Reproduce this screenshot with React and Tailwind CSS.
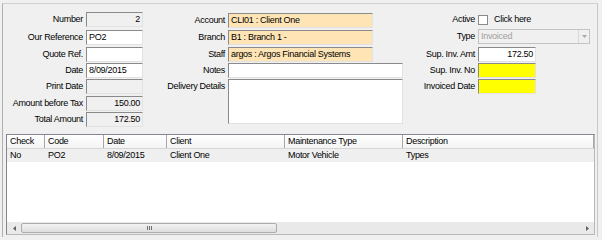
import React from 'react';

const sunken = 'border border-t-[#8a8a8a] border-l-[#8a8a8a] border-r-[#e2e2e2] border-b-[#e2e2e2]';

const Field = ({ label, labelW, mt, children }) => (
  <div className={`flex items-center h-[15px] ${mt}`}>
    <div className={`${labelW} text-right pr-[3px] text-[#000] whitespace-nowrap`}>{label}</div>
    {children}
  </div>
);

const Box = ({ w, bg, right, children }) => (
  <div className={`${w} h-[15px] ${bg} ${sunken} flex items-center px-[2px] ${right ? 'justify-end' : ''} whitespace-nowrap overflow-hidden`}>
    {children}
  </div>
);

const columns = [
  { name: 'Check', w: 'w-[38px]' },
  { name: 'Code', w: 'w-[59px]' },
  { name: 'Date', w: 'w-[63px]' },
  { name: 'Client', w: 'w-[118px]' },
  { name: 'Maintenance Type', w: 'w-[118px]' },
  { name: 'Description', w: 'flex-1' },
];

const row = ['No', 'PO2', '8/09/2015', 'Client One', 'Motor Vehicle', 'Types'];

export default function App() {
  return (
    <div
      className="w-[602px] h-[240px] bg-[#f0f0f0] overflow-hidden text-[9px] tracking-[-0.3px] text-black"
      style={{ fontFamily: '"Liberation Sans", Arial, sans-serif' }}
    >
      <div className="ml-[2px] mt-[3px] w-[596px] h-[234px] border-t border-l border-r border-t-[#d0d0d0] border-l-[#b0b0b0] border-r-[#c8c8c8]">
        {/* form area */}
        <div className="flex pt-[8px] h-[130px]">
          {/* left column */}
          <div className="flex flex-col w-[140px]">
            <Field label="Number" labelW="w-[83px]" mt="mt-0">
              <Box w="w-[57px]" bg="bg-[#f0f0f0]" right>2</Box>
            </Field>
            <Field label="Our Reference" labelW="w-[83px]" mt="mt-[3px]">
              <Box w="w-[57px]" bg="bg-white">PO2</Box>
            </Field>
            <Field label="Quote Ref." labelW="w-[83px]" mt="mt-[2px]">
              <Box w="w-[57px]" bg="bg-white" />
            </Field>
            <Field label="Date" labelW="w-[83px]" mt="mt-[1px]">
              <Box w="w-[57px]" bg="bg-white">8/09/2015</Box>
            </Field>
            <Field label="Print Date" labelW="w-[83px]" mt="mt-[1px]">
              <Box w="w-[57px]" bg="bg-[#f0f0f0]" />
            </Field>
            <Field label="Amount before Tax" labelW="w-[83px]" mt="mt-[2px]">
              <Box w="w-[57px]" bg="bg-[#f0f0f0]" right>150.00</Box>
            </Field>
            <Field label="Total Amount" labelW="w-[83px]" mt="mt-[1px]">
              <Box w="w-[57px]" bg="bg-[#f0f0f0]" right>172.50</Box>
            </Field>
          </div>

          {/* middle column */}
          <div className="flex flex-col w-[260px] pt-[1px]">
            <Field label="Account" labelW="w-[85px]" mt="mt-0">
              <Box w="w-[145px]" bg="bg-[#ffe4b5]">CLI01 : Client One</Box>
            </Field>
            <Field label="Branch" labelW="w-[85px]" mt="mt-[2px]">
              <Box w="w-[145px]" bg="bg-[#ffe4b5]">B1 : Branch 1 -</Box>
            </Field>
            <Field label="Staff" labelW="w-[85px]" mt="mt-[2px]">
              <Box w="w-[145px]" bg="bg-[#ffe4b5]">argos : Argos Financial Systems</Box>
            </Field>
            <Field label="Notes" labelW="w-[85px]" mt="mt-[1px]">
              <Box w="w-[175px]" bg="bg-white" />
            </Field>
            <div className="flex mt-[1px]">
              <div className="w-[85px] text-right pr-[3px] whitespace-nowrap pt-[1px]">Delivery Details</div>
              <div className={`w-[175px] h-[45px] bg-white ${sunken}`} />
            </div>
          </div>

          {/* right column */}
          <div className="flex flex-col">
            <div className="flex items-center h-[15px]">
              <div className="w-[75px] text-right pr-[3px]">Active</div>
              <div className="w-[10px] h-[10px] bg-white border border-[#8a8a8a]" />
              <span className="ml-[6px]">Click here</span>
            </div>
            <Field label="Type" labelW="w-[75px]" mt="mt-[2px]">
              <div className={`w-[112px] h-[15px] bg-[#f0f0f0] border border-[#c4c4c4] flex items-center justify-between pl-[2px] text-[#a0a0a0]`}>
                <span>Invoiced</span>
                <div className="w-[11px] h-[13px] border-l border-[#d8d8d8] flex items-center justify-center">
                  <svg width="5" height="3" viewBox="0 0 5 3"><path d="M0 0H5L2.5 3Z" fill="#a8a8a8" /></svg>
                </div>
              </div>
            </Field>
            <Field label="Sup. Inv. Amt" labelW="w-[75px]" mt="mt-[3px]">
              <Box w="w-[58px]" bg="bg-white" right>172.50</Box>
            </Field>
            <Field label="Sup. Inv. No" labelW="w-[75px]" mt="mt-[1px]">
              <Box w="w-[58px]" bg="bg-[#ffff00]" />
            </Field>
            <Field label="Invoiced Date" labelW="w-[75px]" mt="mt-[1px]">
              <Box w="w-[58px]" bg="bg-[#ffff00]" />
            </Field>
          </div>
        </div>

        {/* grid */}
        <div className="ml-[3px] w-[589px] h-[101px] bg-white border border-t-[#828790] border-l-[#828790] border-r-[#b8b8b8] border-b-[#b8b8b8] flex flex-col">
          <div className="flex h-[14px] border-b border-[#d5d5d5] bg-gradient-to-b from-white to-[#f4f4f4]">
            {columns.map((c) => (
              <div key={c.name} className={`${c.w} h-full border-r border-[#a8a8a8] pl-[3px] flex items-center whitespace-nowrap`}>
                {c.name}
              </div>
            ))}
          </div>
          <div className="flex h-[13px] bg-[#efefef]">
            {columns.map((c, i) => (
              <div key={c.name} className={`${c.w} h-full pl-[3px] flex items-center whitespace-nowrap`}>
                {row[i]}
              </div>
            ))}
          </div>
          <div className="flex-1" />
          <div className="h-[12px] bg-[#e9e9e9] flex items-center">
            <div className="w-[14px] flex items-center justify-center">
              <svg width="3" height="5" viewBox="0 0 3 5"><path d="M3 0V5L0 2.5Z" fill="#606060" /></svg>
            </div>
            <div className="w-[256px] h-[10px] border border-[#acacac] rounded-[2px] bg-gradient-to-b from-[#f2f2f2] to-[#dedede] flex items-center justify-center">
              <div className="flex gap-[1px]">
                <div className="w-[1px] h-[4px] bg-[#707070]" />
                <div className="w-[1px] h-[4px] bg-[#707070]" />
                <div className="w-[1px] h-[4px] bg-[#707070]" />
              </div>
            </div>
            <div className="flex-1" />
            <div className="w-[14px] flex items-center justify-center">
              <svg width="3" height="5" viewBox="0 0 3 5"><path d="M0 0V5L3 2.5Z" fill="#606060" /></svg>
            </div>
          </div>
        </div>
      </div>
    </div>
  );
}
